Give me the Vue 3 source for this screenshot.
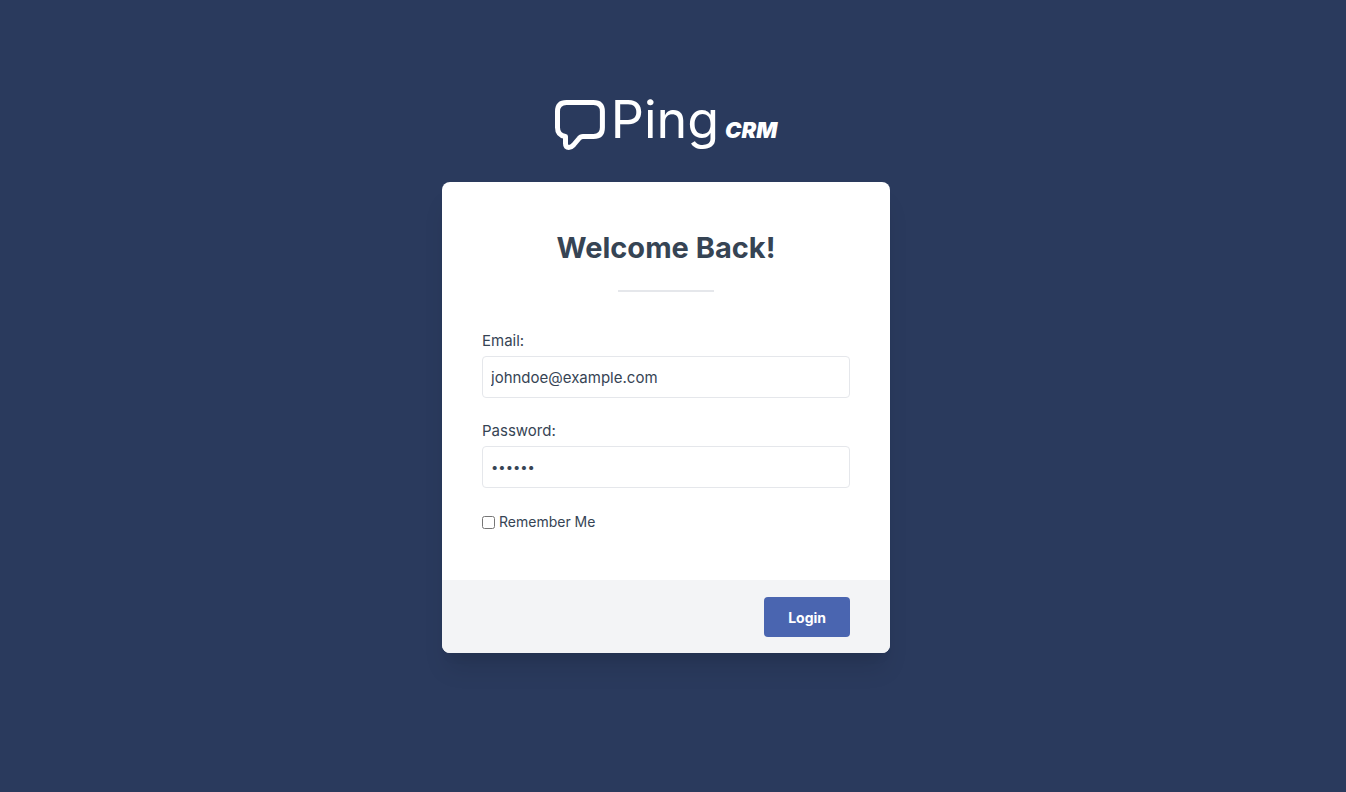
<script setup>
import { ref } from 'vue'

const email = ref('johndoe@example.com')
const password = ref('secret')
const remember = ref(false)
</script>

<template>
  <main class="page">
    <div class="column">
      <h2 class="logo" aria-label="Ping CRM">
        <svg class="bubble" viewBox="0 0 50 50" fill="none" aria-hidden="true">
          <path
            d="M11.500 2.500H38.500Q47.400 2.500 47.400 11.500V27.500Q47.400 36.500 38.500 36.500H28Q25.500 36.500 24 38.500L18.500 45Q16.300 47.400 13.800 47.400Q10.500 47.400 10.500 43.500V36.500Q2.500 35.500 2.500 27.500V11.500Q2.500 2.500 11.500 2.500Z"
            stroke="currentColor"
            stroke-width="5"
            stroke-linejoin="round"
          />
        </svg>
        <span class="ping">Ping</span>
        <span class="crm">CRM</span>
      </h2>
      <form class="card" @submit.prevent>
        <div class="body">
          <h1 class="title">Welcome Back!</h1>
          <div class="divider"></div>
          <div class="field">
            <label for="email">Email:</label>
            <input id="email" v-model="email" type="email" autocomplete="off" />
          </div>
          <div class="field">
            <label for="password">Password:</label>
            <input id="password" v-model="password" type="password" autocomplete="off" />
          </div>
          <label class="remember" for="remember">
            <input id="remember" v-model="remember" type="checkbox" />
            <span>Remember Me</span>
          </label>
        </div>
        <div class="footer">
          <button type="submit">Login</button>
        </div>
      </form>
    </div>
  </main>
</template>

<style>
body {
  background: #2a3a5d;
}
</style>

<style scoped>
.page {
  box-sizing: border-box;
  min-height: 100vh;
  padding: 0 14px 39px 0;
  display: flex;
  align-items: center;
  justify-content: center;
  background: #2a3a5d;
  color: #364454;
  font-family: Inter, "Liberation Sans", sans-serif;
  font-size: 15px;
}
.column {
  width: 100%;
  max-width: 448px;
}
.logo {
  display: flex;
  justify-content: center;
  align-items: baseline;
  gap: 6px;
  height: 50px;
  margin: 0;
  color: #fff;
  line-height: 40px;
}
.bubble {
  align-self: flex-start;
  width: 50px;
  height: 50px;
}
.ping {
  font-size: 52px;
  font-weight: 400;
}
.crm {
  font-size: 22px;
  font-weight: 900;
  font-style: italic;
}
.card {
  margin-top: 32px;
  overflow: hidden;
  border-radius: 8px;
  background: #fff;
  box-shadow: 0 20px 25px -5px rgba(0, 0, 0, 0.1), 0 10px 10px -5px rgba(0, 0, 0, 0.04);
}
.body {
  padding: 48px 40px;
}
.title {
  margin: 0;
  text-align: center;
  font-size: 29px;
  line-height: 36px;
  font-weight: 700;
}
.divider {
  width: 96px;
  height: 2px;
  margin: 24px auto 40px;
  background: #e5e7eb;
}
.field {
  margin-bottom: 24px;
}
.field label {
  display: block;
  margin-bottom: 6px;
  line-height: 18px;
}
.field input {
  box-sizing: border-box;
  display: block;
  width: 100%;
  height: 42px;
  padding: 8px;
  border: 1px solid #e5e7eb;
  border-radius: 4px;
  outline: none;
  background: #fff;
  color: inherit;
  font: inherit;
}
.field input[type="password"] {
  font-size: 13px;
}
.remember {
  display: flex;
  align-items: center;
  width: max-content;
  font-size: 14px;
  line-height: 20px;
}
.remember input {
  width: 13px;
  height: 13px;
  margin: 0 4px 0 0;
}
.footer {
  display: flex;
  justify-content: flex-end;
  padding: 16px 40px;
  border-top: 1px solid #f3f4f6;
  background: #f3f4f6;
}
button {
  height: 40px;
  padding: 0 24px;
  border: 0;
  border-radius: 4px;
  background: #4a65b0;
  color: #fff;
  font: 700 14px Inter, "Liberation Sans", sans-serif;
  cursor: pointer;
}
</style>
